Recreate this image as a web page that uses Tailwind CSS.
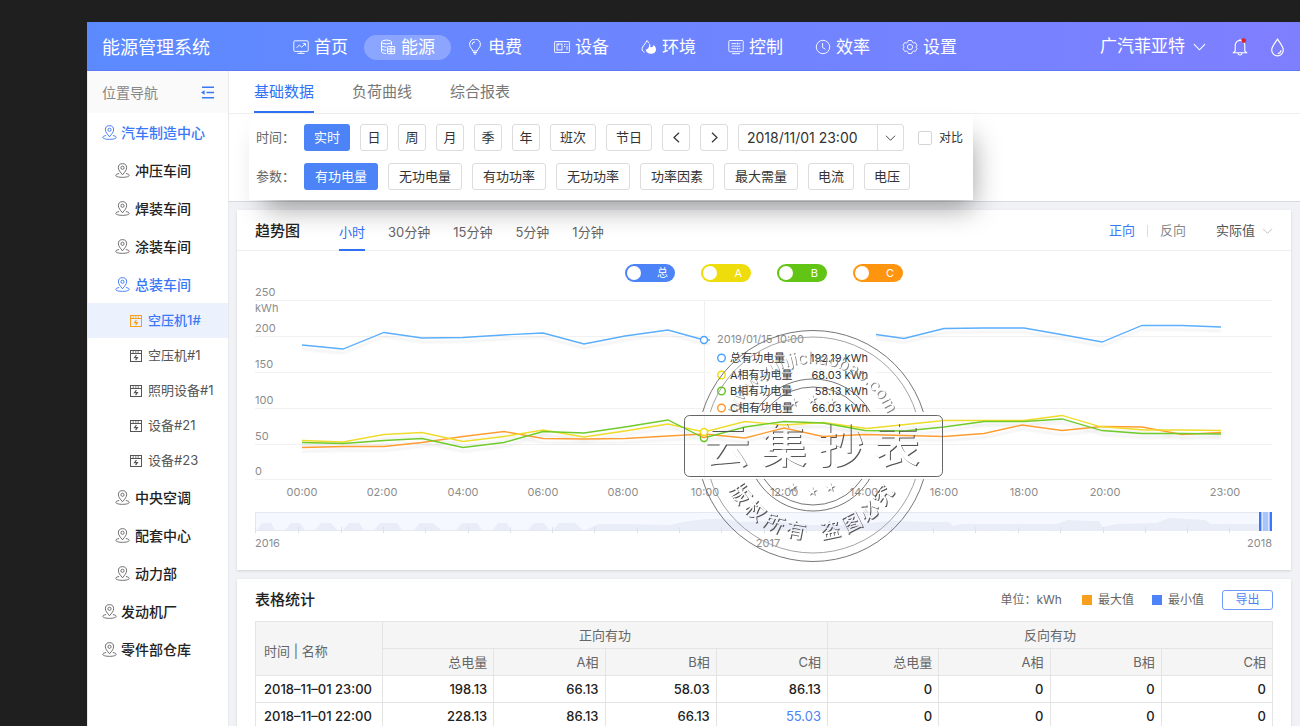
<!DOCTYPE html>
<html lang="zh-CN">
<head>
  <meta charset="UTF-8">
  <meta name="viewport" content="width=device-width, initial-scale=1.0">
  <title>能源管理系统</title>
  <script src="https://cdn.jsdelivr.net/npm/@tailwindcss/browser@4"></script>
</head>
<body class="h-screen overflow-hidden bg-[#1f1f1f] pt-[22px] pl-[87px] font-['Inter','Noto_Sans_CJK_SC',sans-serif] text-[13px] text-[#333]">

  <!-- shared icons -->
  <svg class="hidden">
    <symbol id="pin" viewBox="0 0 16 16" fill="none" stroke="currentColor">
      <path d="M8 12.6C5.6 9.6 3.6 7.5 3.6 5.1a4.4 4.4 0 0 1 8.8 0C12.4 7.5 10.4 9.6 8 12.6z"/>
      <circle cx="8" cy="5.1" r="1.7"/>
      <path d="M4.4 11.2C2.300 11.600.8 12.300.8 13.200c0 1.200 3.200 2.100 7.200 2.100s7.200-.9 7.200-2.100c0-.9-1.500-1.600-3.600-2"/>
    </symbol>
    <symbol id="meter" viewBox="0 0 14 14" fill="none" stroke="currentColor">
      <rect x="1.500" y="1.500" width="11" height="11"/>
      <path d="M1.500 4.500h11"/>
      <path d="M3.500 3h7" stroke-dasharray="1.500 1"/>
      <path d="M7.400 6L5.600 8.600h2.800L6.600 11.200" stroke-width="1.200"/>
    </symbol>
    <symbol id="down" viewBox="0 0 14 8" fill="none" stroke="currentColor" stroke-width="1.200"><path d="M1 1l6 6 6-6"/></symbol>
  </svg>

  <div class="flex h-full flex-col">
    <header class="flex h-[49px] shrink-0 items-center border-b border-[#5f78f5] bg-linear-to-r from-[#5b8aff] to-[#7e7fff] px-[15px] pt-[2px] text-white">
      <h1 class="w-[175px] text-[18px]">能源管理系统</h1>
      <nav class="flex text-[17px] leading-[25px]">
        <a href="#" class="flex items-center gap-[5px] rounded-full px-4">
          <svg class="size-4" viewBox="0 0 16 16" fill="none" stroke="currentColor" stroke-width=".9"><rect x=".8" y="1.800" width="14.400" height="10.600" rx="1"/><path d="M3.500 9l2.800-3 2.400 2.200L12.300 4.800M9.800 4.600h2.700v2.600M4.500 14.400h7M8 12.400v2"/></svg>
          首页</a>
        <a href="#" class="flex items-center gap-[5px] rounded-full bg-white/25 px-4">
          <svg class="size-4" viewBox="0 0 16 16" fill="none" stroke="currentColor"><ellipse cx="6.500" cy="3" rx="5" ry="1.900"/><path d="M1.500 3v9.600c0 1.100 2 1.900 4.700 1.900M11.500 3v3M1.500 6.200c0 1.100 2.200 1.900 5 1.900M1.500 9.400c0 1.100 2 1.900 4.700 1.900"/><rect x="7.500" y="7.500" width="7.200" height="7.200" rx=".8"/><path d="M7.500 10h7.200M7.500 12.300h7.200M11 7.500v7.200"/></svg>
          能源</a>
        <a href="#" class="flex items-center gap-[5px] rounded-full px-4">
          <svg class="size-4" viewBox="0 0 16 16" fill="none" stroke="currentColor"><path d="M5.600 12c0-2.300-3-3.400-3-6.600a5.400 5.400 0 0 1 10.800 0c0 3.200-3 4.300-3 6.600zM6 13.500h4M6.800 15h2.400M5.200 5.600A2.800 2.800 0 0 1 8 2.800"/></svg>
          电费</a>
        <a href="#" class="flex items-center gap-[5px] rounded-full px-4">
          <svg class="size-4" viewBox="0 0 16 16" fill="none" stroke="currentColor" stroke-width=".9"><rect x=".6" y="2.500" width="14.800" height="11" rx=".6"/><rect x="3" y="5" width="5" height="6"/><path d="M10 5.300h1.500M12.500 5.300h1M10 7.500h1.200M13 7v4M4.500 5v1.500"/></svg>
          设备</a>
        <a href="#" class="flex items-center gap-[5px] rounded-full px-4">
          <svg class="size-4" viewBox="0 0 16 16" fill="none" stroke="currentColor"><path d="M3.600 13.200C2 12.700 1 11.400 1 9.800c0-2.200 3.600-5 5-8.300.8.9 1.300 1.700 1.600 2.600"/><path d="M8.200 4.200c1.300 1 1.300 2.600 1.100 3.900 1 .5 2.200.3 2.900-.8.2-.5.200-1 .1-1.500 1.700 1.200 2.700 2.900 2.700 4.600 0 2.600-2.200 4.400-5.100 4.400-2.800 0-5-1.700-5.200-4.200C6.900 10.400 8.600 8 8.200 4.200z" fill="currentColor" stroke="none"/></svg>
          环境</a>
        <a href="#" class="flex items-center gap-[5px] rounded-full px-4">
          <svg class="size-4" viewBox="0 0 16 16" fill="none" stroke="currentColor" stroke-width=".9"><rect x=".8" y="1.500" width="14.400" height="11.200" rx="1"/><path d="M3.500 4.600h5M10.500 4.600h2M9.500 3.600v2M3.500 7.200h1.500M7 7.200h5.500M6 6.200v2M3.500 9.800h5M10.500 9.800h2M9.500 8.800v2M4 14.700h8"/></svg>
          控制</a>
        <a href="#" class="flex items-center gap-[5px] rounded-full px-4">
          <svg class="size-4" viewBox="0 0 16 16" fill="none" stroke="currentColor" stroke-width=".9"><circle cx="8" cy="8" r="6.700"/><path d="M7.600 4v4.500l2.800 1.700"/></svg>
          效率</a>
        <a href="#" class="flex items-center gap-[5px] rounded-full px-4">
          <svg class="size-4" viewBox="0 0 16 16" fill="none" stroke="currentColor" stroke-width=".9"><path d="M6.300 1.500h3.400l.6 1.700 1.200.7 1.800-.3 1.700 2.900L13.800 8l1.200 1.500-1.700 2.900-1.800-.3-1.200.7-.6 1.700H6.300l-.6-1.700-1.200-.7-1.800.3L1 9.500 2.200 8 1 6.500l1.700-2.900 1.800.3 1.200-.7z"/><circle cx="8" cy="8" r="2.600"/></svg>
          设置</a>
      </nav>
      <div class="ml-auto flex items-center">
        <div class="relative flex items-center">
          <select aria-label="公司" class="appearance-none pr-[21px] text-[17px]"><option>广汽菲亚特</option></select>
          <svg class="pointer-events-none absolute right-0 h-[8px] w-[13px]"><use href="#down"/></svg>
        </div>
        <button aria-label="通知" class="ml-[26px]">
          <svg class="h-[18px] w-4" viewBox="0 0 16 18" fill="none" stroke="currentColor" stroke-width="1.100"><path d="M3.200 13V7.200a4.800 4.800 0 0 1 9.600 0V13l1.700 1.700h-13zM6 15.200a2 1.800 0 0 0 4 0M8 1v1.400"/><circle cx="11.800" cy="2.600" r="2.300" fill="#e0202c" stroke="none"/></svg>
        </button>
        <button aria-label="主题" class="ml-[22px]">
          <svg class="h-[19px] w-[15px]" viewBox="0 0 15 19" fill="none" stroke="currentColor" stroke-width="1.200"><path d="M7.500 1.200C5 5 1.700 8.800 1.700 12a5.800 5.800 0 0 0 11.600 0c0-3.200-3.300-7-5.800-10.800z"/><path d="M11 12.300a3.500 3.500 0 0 1-3.300 3.300"/></svg>
        </button>
      </div>
    </header>

    <div class="flex min-h-0 flex-1">
      <aside class="w-[142px] shrink-0 border-x border-[#e8e9ec] bg-white">
        <div class="flex h-[42px] items-center justify-between bg-[#fafafa] pr-[14px] pl-[14px] text-[14px] text-[#888]">
          位置导航
          <button aria-label="收起导航" class="text-[#3b78f6]">
            <svg class="size-[13px]" viewBox="0 0 13 13" fill="none" stroke="currentColor" stroke-width="1.500"><path d="M1 1.200h12M5.500 6.500H13M1 11.800h12"/><path d="M0 6.500l3.600-2.300v4.600z" fill="currentColor" stroke="none"/></svg>
          </button>
        </div>
        <ul id="tree"></ul>
      </aside>

      <main class="min-w-0 flex-1 bg-[#f1f2f5]">
        <section class="h-[131px] border-b border-[#d8d9dc] bg-white">
          <div class="flex h-[43px] gap-[38px] border-b border-[#eee] pl-[25px] text-[15px] text-[#777]">
            <button class="border-b-2 border-[#3070f5] pt-[3px] text-[#3070f5]">基础数据</button>
            <button class="border-b-2 border-transparent pt-[3px]">负荷曲线</button>
            <button class="border-b-2 border-transparent pt-[3px]">综合报表</button>
          </div>
          <div class="relative z-10 ml-5 flex h-[86px] w-[724px] flex-col gap-3 bg-white pt-[10px] pl-[7px] shadow-[8px_16px_28px_-8px_rgba(0,0,0,0.38)]">
            <div class="flex items-center gap-[10px]">
              <span class="w-[38px] whitespace-nowrap text-[#666]">时间：</span>
              <button class="h-[27px] w-[46px] rounded-[3px] bg-[#4c83f6] text-white">实时</button>
              <button class="h-[27px] w-7 rounded-[3px] border border-[#dcdcdc]">日</button>
              <button class="h-[27px] w-7 rounded-[3px] border border-[#dcdcdc]">周</button>
              <button class="h-[27px] w-7 rounded-[3px] border border-[#dcdcdc]">月</button>
              <button class="h-[27px] w-7 rounded-[3px] border border-[#dcdcdc]">季</button>
              <button class="h-[27px] w-7 rounded-[3px] border border-[#dcdcdc]">年</button>
              <button class="h-[27px] w-[46px] rounded-[3px] border border-[#dcdcdc]">班次</button>
              <button class="h-[27px] w-[46px] rounded-[3px] border border-[#dcdcdc]">节日</button>
              <button aria-label="上一个" class="flex h-[27px] w-7 items-center justify-center rounded-[3px] border border-[#dcdcdc]">
                <svg class="h-[11px] w-[7px]" viewBox="0 0 7 11" fill="none" stroke="currentColor" stroke-width="1.200"><path d="M6 .8L1 5.500l5 4.700"/></svg>
              </button>
              <button aria-label="下一个" class="flex h-[27px] w-7 items-center justify-center rounded-[3px] border border-[#dcdcdc]">
                <svg class="h-[11px] w-[7px]" viewBox="0 0 7 11" fill="none" stroke="currentColor" stroke-width="1.200"><path d="M1 .8l5 4.700-5 4.700"/></svg>
              </button>
              <div class="flex h-[27px] w-[166px] rounded-[3px] border border-[#dcdcdc]">
                <input type="text" aria-label="日期时间" value="2018/11/01 23:00" class="min-w-0 flex-1 pl-[8px] text-[14px]">
                <button aria-label="选择日期" class="flex w-[26px] items-center justify-center border-l border-[#dcdcdc]">
                  <svg class="h-[6px] w-[11px]"><use href="#down"/></svg>
                </button>
              </div>
              <label class="ml-1 flex items-center gap-[7px] whitespace-nowrap text-[12px]">
                <input type="checkbox" class="size-[14px] appearance-none rounded-[2px] border border-[#d4d4d4]">对比
              </label>
            </div>
            <div class="flex items-center gap-[10px]">
              <span class="w-[38px] whitespace-nowrap text-[#666]">参数：</span>
              <button class="h-[27px] w-[74px] rounded-[3px] bg-[#4c83f6] text-white">有功电量</button>
              <button class="h-[27px] w-[74px] rounded-[3px] border border-[#dcdcdc]">无功电量</button>
              <button class="h-[27px] w-[74px] rounded-[3px] border border-[#dcdcdc]">有功功率</button>
              <button class="h-[27px] w-[74px] rounded-[3px] border border-[#dcdcdc]">无功功率</button>
              <button class="h-[27px] w-[74px] rounded-[3px] border border-[#dcdcdc]">功率因素</button>
              <button class="h-[27px] w-[74px] rounded-[3px] border border-[#dcdcdc]">最大需量</button>
              <button class="h-[27px] w-[46px] rounded-[3px] border border-[#dcdcdc]">电流</button>
              <button class="h-[27px] w-[46px] rounded-[3px] border border-[#dcdcdc]">电压</button>
            </div>
          </div>
        </section>

        <div class="flex flex-col gap-[9px] pt-2 pr-[9px] pl-2">
          <section class="bg-white pb-1 shadow-sm">
            <div class="flex h-[41px] border-b border-[#eee] px-[18px] pt-[2px]">
              <h2 class="w-[84px] self-center text-[15px] font-medium text-[#222]">趋势图</h2>
              <div class="-mb-px flex gap-[23px] text-[#666]">
                <button class="border-b-2 border-[#3070f5] pt-1 text-[#3070f5]">小时</button>
                <button class="border-b-2 border-transparent pt-1">30分钟</button>
                <button class="border-b-2 border-transparent pt-1">15分钟</button>
                <button class="border-b-2 border-transparent pt-1">5分钟</button>
                <button class="border-b-2 border-transparent pt-1">1分钟</button>
              </div>
              <div class="ml-auto flex items-center">
                <button class="text-[#3b78f6]">正向</button>
                <span class="mx-3 h-3 w-px bg-[#ddd]"></span>
                <button class="text-[#888]">反向</button>
                <div class="relative ml-[30px] flex items-center">
                  <select aria-label="数值类型" class="appearance-none pr-[17px] text-[#555]"><option>实际值</option></select>
                  <svg class="pointer-events-none absolute right-0 h-[6px] w-[11px] text-[#bbb]"><use href="#down"/></svg>
                </div>
              </div>
            </div>

            <div class="mt-[13px] mb-1 flex justify-center gap-[26px] text-[11px] leading-[18px] text-white">
              <label class="flex h-[18px] w-[50px] items-center justify-between rounded-full bg-[#4c83f6] pr-[7px] pl-[2px]"><input type="checkbox" class="sr-only" checked><span class="size-[14px] rounded-full bg-white"></span>总</label>
              <label class="flex h-[18px] w-[50px] items-center justify-between rounded-full bg-[#efdc0b] pr-[9px] pl-[2px]"><input type="checkbox" class="sr-only" checked><span class="size-[14px] rounded-full bg-white"></span>A</label>
              <label class="flex h-[18px] w-[50px] items-center justify-between rounded-full bg-[#62c414] pr-[9px] pl-[2px]"><input type="checkbox" class="sr-only" checked><span class="size-[14px] rounded-full bg-white"></span>B</label>
              <label class="flex h-[18px] w-[50px] items-center justify-between rounded-full bg-[#ff950f] pr-[9px] pl-[2px]"><input type="checkbox" class="sr-only" checked><span class="size-[14px] rounded-full bg-white"></span>C</label>
            </div>

            <div class="px-[18px]">
              <svg class="block w-full" viewBox="255 286 1018 280" fill="none" font-size="11">
                <defs>
                  <filter id="soft" x="-5%" y="-50%" width="110%" height="200%"><feDropShadow dx="0" dy="4" stdDeviation="1" flood-color="#000" flood-opacity=".08"/></filter>
                  <filter id="emboss">
                    <feOffset in="SourceGraphic" dx="-1" dy="-1" result="moved"/>
                    <feComposite in="SourceGraphic" in2="moved" operator="out"/>
                  </filter>
                  <clipPath id="ring"><path d="M690 320h246v92H690zM690 479h246v90H690z"/></clipPath>
                  <path id="arc" d="M730 446a82 82 0 0 1 164 0"/>
                </defs>

                <!-- axes -->
                <path d="M255 300.500h1017M255 336.500h1017M255 372.500h1017M255 408.500h1017M255 444.500h1017M255 479.500h1017M704.500 300v180" stroke="#f1f1f1"/>
                <g fill="#8c8c8c">
                  <text x="255" y="296">250</text><text x="255" y="312">kWh</text><text x="255" y="332">200</text>
                  <text x="255" y="368">150</text><text x="255" y="404">100</text><text x="255" y="440">50</text><text x="255" y="475">0</text>
                </g>
                <g fill="#8c8c8c" text-anchor="middle">
                  <text x="302" y="496">00:00</text><text x="382" y="496">02:00</text><text x="463" y="496">04:00</text>
                  <text x="543" y="496">06:00</text><text x="623" y="496">08:00</text><text x="705" y="496">10:00</text>
                  <text x="784" y="496">12:00</text><text x="864" y="496">14:00</text><text x="944" y="496">16:00</text>
                  <text x="1024" y="496">18:00</text><text x="1105" y="496">20:00</text><text x="1225" y="496">23:00</text>
                </g>

                <!-- series -->
                <g filter="url(#soft)" stroke-width="1.300">
                  <path stroke="#5aaefc" d="M302 345l41 4 41-16.500 38 5.500 41-.5 40-2.500 40-2 41 11 41-8 43-6 36 10h6M876 334.500l28 4 40-10 40-.5h40l40 7 38 7 40-16.500h40l39 1.500"/>
                  <path stroke="#ff9d33" d="M302 447.500l41-1h41l38-4 41-6 41-5 39 7 41 .5 41-.5 43-2.500 36-2 41 4 39-10 39 8.500 42-2 39 1 40 1 40-3 38-8.500 40 5.500 40-4 40 .5 40 7.500 39-2"/>
                  <path stroke="#efdc2a" d="M302 440.500l41 1.500 41-7.500 38-2 41 9 41-5 39-6.500 41 7 41-6 43-7 36 8 41-10.500 39 3.500 39-2.500 44 6 77-8h80l38-5 38 11 45 3.500h37l39 .5"/>
                  <path stroke="#6fca2c" d="M302 442.500l41 1 41-3 38-2 41 9 41-5 39-11 41 1.500 41-6 43-7 36 18 41-11 39-5.500 39 1.500 42 7.500 39 .5 40-4 40-5.500h40l38-2.500 40 11.500 40 3h40l39 .5"/>
                </g>
                <g fill="#fff" stroke-width="1.400">
                  <circle cx="704" cy="340" r="3.500" stroke="#4ba3fb"/>
                  <circle cx="704" cy="438" r="3.500" stroke="#5fc41a"/>
                  <circle cx="704" cy="434" r="3.500" stroke="#ff9826"/>
                  <circle cx="704" cy="432" r="3.500" stroke="#efdc0b"/>
                </g>

                <!-- range slider -->
                <rect x="255.500" y="512.500" width="1016" height="18" fill="#f5f8ff" stroke="#e3e8f1"/>
                <path fill="#e9edf7" d="M257 530l5-7h9l4 7zM285 530l6-7h9l5 7zM315 530l6-7h10l6 7zM343 530l6-7h10l5 7zM374 530l6-7h17l5 7zM414 530l6-7h13l8 7zM456 530l6-7h15l5 7zM493 530l5-7h9l3 7zM528 530l6-7h10l5 7zM553 530l6-7h16l8 7zM586 530l12-6h22l50 1 18-4 20-2h20l10 3 32-1 40 4h40l40-4 40 1h19l4 4 10-2h94l10-4 24 1h8l4 6 14-3 40-1 12-5 36 2 6 4h49v7z"/>
                <path stroke="#dce1ea" d="M255.500 527v6M298.500 527v6M341.500 527v6M383.500 527v6M425.500 527v6M468.500 527v6M510.500 527v6M552.500 527v6M594.500 527v6M637.500 527v6M679.500 527v6M721.500 527v6M764.500 527v6M806.500 527v6M848.500 527v6M891.500 527v6M933.500 527v6M975.500 527v6M1018.500 527v6M1060.500 527v6M1103.500 527v6M1145.500 527v6M1187.500 527v6M1229.500 527v6"/>
                <path fill="#aac3fa" d="M1260 512h12v19h-12z"/>
                <path stroke="#3b78f6" stroke-width="2" d="M1260 512v19M1271 512v19"/>
                <path stroke="#dbe6fe" d="M1262.500 512v19M1268.500 512v19"/>
                <g fill="#8c8c8c"><text x="255" y="547">2016</text><text x="768" y="547" text-anchor="middle">2017</text><text x="1272" y="547" text-anchor="end">2018</text></g>

                <!-- tooltip -->
                <rect x="710" y="330" width="166" height="86" fill="#fff" fill-opacity=".85"/>
                <text x="717" y="343" fill="#8c8c8c">2019/01/15 10:00</text>
                <g stroke-width="1.400">
                  <circle cx="721.500" cy="358" r="3.800" stroke="#4ba3fb"/><circle cx="721.500" cy="375" r="3.800" stroke="#efdc0b"/>
                  <circle cx="721.500" cy="391" r="3.800" stroke="#5fc41a"/><circle cx="721.500" cy="408" r="3.800" stroke="#ff9826"/>
                </g>
                <g fill="#333">
                  <text x="730" y="362">总有功电量</text><text x="730" y="379">A相有功电量</text><text x="730" y="395">B相有功电量</text><text x="730" y="412">C相有功电量</text>
                </g>
                <g fill="#333" text-anchor="end">
                  <text x="868" y="362">192.19 kWh</text><text x="868" y="379">68.03 kWh</text><text x="868" y="395">58.13 kWh</text><text x="868" y="412">66.03 kWh</text>
                </g>

                <!-- stamp -->
                <g clip-path="url(#ring)" stroke="#666" stroke-width=".9">
                  <circle cx="813" cy="446" r="115.500"/><circle cx="813" cy="445" r="108" stroke="#999"/>
                  <circle cx="813" cy="445" r="66"/><circle cx="813" cy="446" r="59"/>
                </g>
                <rect x="684.500" y="415.500" width="258" height="61" rx="5" stroke="#666"/>
                <g filter="url(#emboss)" fill="#555">
                  <g font-size="46" font-weight="500" text-anchor="middle"><text x="728" y="463">云</text><text x="785" y="463">集</text><text x="842" y="463">抄</text><text x="898" y="463">表</text></g>
                  <text font-size="17" fill="#888" text-anchor="middle"><textPath href="#arc" startOffset="50%">www.yunjichaobao.com</textPath></text>
                  <g id="seal" font-size="20" font-weight="500" text-anchor="middle"></g>
                  <path id="stars" fill="#777" d=""/>
                </g>
              </svg>
            </div>
          </section>

          <section class="bg-white px-[18px] shadow-sm">
            <div class="flex h-[42px] items-center text-[12px] text-[#666]">
              <h2 class="mr-auto text-[15px] font-medium text-[#222]">表格统计</h2>
              <span>单位：kWh</span>
              <span class="ml-5 size-[10px] bg-[#f8a01c]"></span><span class="ml-[6px]">最大值</span>
              <span class="ml-[18px] size-[10px] bg-[#4c83f6]"></span><span class="ml-[6px]">最小值</span>
              <button class="ml-[18px] h-5 w-[51px] rounded-[3px] border border-[#6d9bfb] text-[#4c83f6]">导出</button>
            </div>
            <table class="w-full table-fixed border-collapse text-right leading-[18px]">
              <thead class="bg-[#f5f5f5] text-[#666]">
                <tr class="h-[27px]">
                  <th rowspan="2" class="w-[127px] border border-[#e4e4e4] pt-1 pl-2 text-left font-normal">时间 | 名称</th>
                  <th colspan="4" class="border border-[#e4e4e4] text-center font-normal">正向有功</th>
                  <th colspan="4" class="border border-[#e4e4e4] text-center font-normal">反向有功</th>
                </tr>
                <tr id="phases" class="h-[27px]"></tr>
              </thead>
              <tbody id="rows" class="font-medium text-[#222]"></tbody>
            </table>
          </section>
        </div>
      </main>
    </div>
  </div>

  <script>
    const tree = [
      { name: "汽车制造中心", level: 1, open: true },
      { name: "冲压车间", level: 2 },
      { name: "焊装车间", level: 2 },
      { name: "涂装车间", level: 2 },
      { name: "总装车间", level: 2, open: true },
      { name: "空压机1#", level: 3, open: true },
      { name: "空压机#1", level: 3 },
      { name: "照明设备#1", level: 3 },
      { name: "设备#21", level: 3 },
      { name: "设备#23", level: 3 },
      { name: "中央空调", level: 2 },
      { name: "配套中心", level: 2 },
      { name: "动力部", level: 2 },
      { name: "发动机厂", level: 1 },
      { name: "零件部仓库", level: 1 }
    ];

    const levelClass = {
      1: "h-[38px] pl-[14px] gap-1 text-[14px] font-medium",
      2: "h-[38px] pl-[27px] gap-[5px] text-[14px] font-medium",
      3: "h-[35px] pl-[41px] gap-[5px] text-[13px]"
    };

    document.getElementById("tree").innerHTML = tree.map(n => {
      const leaf = n.level === 3;
      const color = n.open ? "text-[#3b78f6]" : leaf ? "text-[#555]" : "text-[#222]";
      const iconColor = leaf ? (n.open ? "text-[#f8a01c]" : "text-[#555]") : (n.open ? "text-[#3b78f6]" : "text-[#666]");
      return `<li><a href="#" class="flex items-center whitespace-nowrap ${levelClass[n.level]} ${color} ${leaf && n.open ? "bg-[#ebf2fe] font-medium" : ""}">
        <svg class="${leaf ? "size-[14px]" : "size-[15px]"} shrink-0 ${iconColor}"><use href="#${leaf ? "meter" : "pin"}"/></svg>${n.name}</a></li>`;
    }).join("");

    const phases = ["总电量", "A相", "B相", "C相"];
    document.getElementById("phases").innerHTML = [...phases, ...phases]
      .map(p => `<th class="border border-[#e4e4e4] pr-[6px] font-normal">${p}</th>`).join("");

    const rows = [
      ["2018–11–01 23:00", "198.13", "66.13", "58.03", "86.13", "0", "0", "0", "0"],
      ["2018–11–01 22:00", "228.13", "86.13", "66.13", "55.03", "0", "0", "0", "0"]
    ];
    document.getElementById("rows").innerHTML = rows.map(r => `<tr class="h-[27px]">${r.map((v, i) =>
      `<td class="border border-[#e4e4e4] whitespace-nowrap ${i === 0 ? "pl-2 text-left" : "pr-[6px]"} ${v === "55.03" ? "font-normal text-[#4c83f6]" : ""}">${v}</td>`).join("")}</tr>`).join("");

    // lower ring of the stamp
    const angles = [56, 41, 26, 11, -12, -27, -41, -55];
    document.getElementById("seal").innerHTML = [..."版权所有盗图必究"]
      .map((c, i) => `<text x="813" y="540" transform="rotate(${angles[i]} 813 446)">${c}</text>`).join("");

    const star = (cx, cy) => "M" + Array.from({ length: 10 }, (_, k) => {
      const r = k % 2 ? 2 : 5, a = Math.PI * k / 5;
      return `${(cx + r * Math.sin(a)).toFixed(1)} ${(cy - r * Math.cos(a)).toFixed(1)}`;
    }).join("L") + "z";
    document.getElementById("stars").setAttribute("d",
      [[794, 403], [813, 400], [832, 403], [793, 488], [813, 492], [831, 488]].map(p => star(...p)).join(""));
  </script>
</body>
</html>
